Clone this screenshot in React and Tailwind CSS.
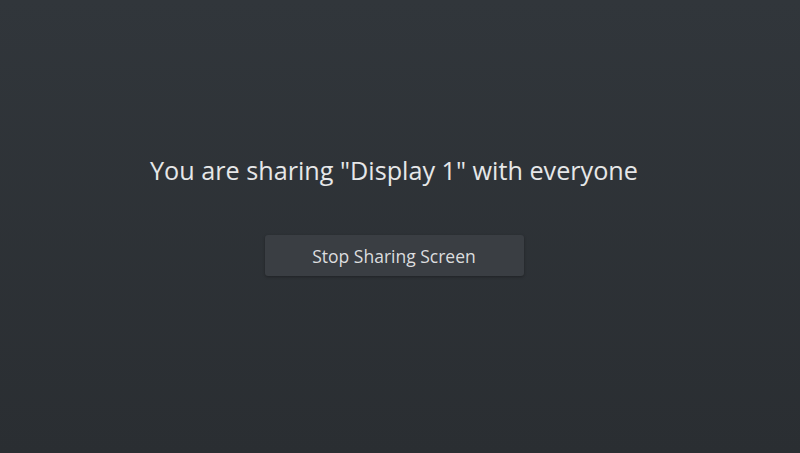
import React from 'react';

const App = () => {
  return (
    <div
      className="w-[800px] h-[453px] bg-gradient-to-b from-[#31363b] to-[#2a2e32] flex flex-col items-center pr-[12px]"
      style={{ fontFamily: '"Open Sans", "Noto Sans", sans-serif' }}
    >
      <div className="mt-[152px] text-[25.2px] leading-[36px] text-[#e6e7e8]">
        You are sharing "Display 1" with everyone
      </div>
      <button className="mt-[47px] w-[259px] h-[41px] bg-[#3a3e43] rounded-[3px] text-[17.5px] text-[#dcdddf] pt-[2px] shadow-[0_1px_3px_rgba(0,0,0,0.3)]">
        Stop Sharing Screen
      </button>
    </div>
  );
};

export default App;
